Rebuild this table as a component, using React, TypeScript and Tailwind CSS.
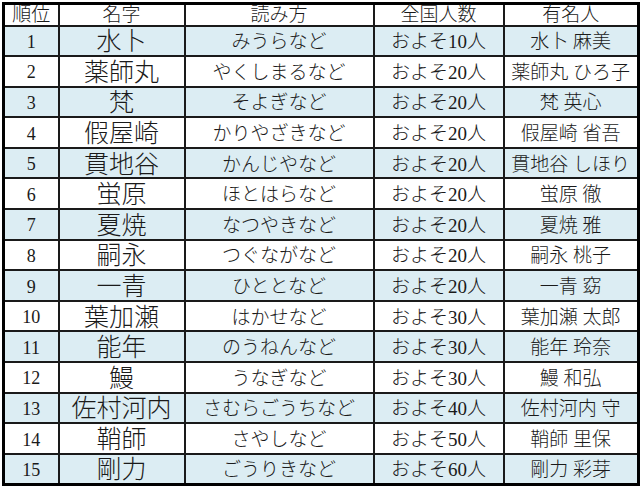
import React from "react";

const rows: [string, string, string, string, string][] = [
  ["1", "水卜", "みうらなど", "およそ10人", "水卜 麻美"],
  ["2", "薬師丸", "やくしまるなど", "およそ20人", "薬師丸 ひろ子"],
  ["3", "梵", "そよぎなど", "およそ20人", "梵 英心"],
  ["4", "假屋崎", "かりやざきなど", "およそ20人", "假屋崎 省吾"],
  ["5", "貫地谷", "かんじやなど", "およそ20人", "貫地谷 しほり"],
  ["6", "蛍原", "ほとはらなど", "およそ20人", "蛍原 徹"],
  ["7", "夏焼", "なつやきなど", "およそ20人", "夏焼 雅"],
  ["8", "嗣永", "つぐながなど", "およそ20人", "嗣永 桃子"],
  ["9", "一青", "ひととなど", "およそ20人", "一青 窈"],
  ["10", "葉加瀬", "はかせなど", "およそ30人", "葉加瀬 太郎"],
  ["11", "能年", "のうねんなど", "およそ30人", "能年 玲奈"],
  ["12", "鰻", "うなぎなど", "およそ30人", "鰻 和弘"],
  ["13", "佐村河内", "さむらごうちなど", "およそ40人", "佐村河内 守"],
  ["14", "鞘師", "さやしなど", "およそ50人", "鞘師 里保"],
  ["15", "剛力", "ごうりきなど", "およそ60人", "剛力 彩芽"],
];

export default function App() {
  return (
    <div className="w-[640px] h-[489px] bg-white pl-[2px] pt-[2px] overflow-hidden font-['Liberation_Serif','Noto_Sans_CJK_JP',serif] text-[#1a1a1a]">
      <table className="border-collapse border-[3px] border-black table-fixed w-[635px]">
        <colgroup>
          <col className="w-[55px]" />
          <col className="w-[126px]" />
          <col className="w-[189px]" />
          <col className="w-[130px]" />
          <col className="w-[135px]" />
        </colgroup>
        <thead>
          <tr className="h-[22px] bg-white text-[19px] leading-none">
            <th className="border-2 border-[#1a1a1a] font-light p-0 whitespace-nowrap">順位</th>
            <th className="border-2 border-[#1a1a1a] font-light p-0">名字</th>
            <th className="border-2 border-[#1a1a1a] font-light p-0">読み方</th>
            <th className="border-2 border-[#1a1a1a] font-light p-0">全国人数</th>
            <th className="border-2 border-[#1a1a1a] font-light p-0">有名人</th>
          </tr>
        </thead>
        <tbody>
          {rows.map((r, i) => (
            <tr key={r[0]} className={`h-[30.6px] leading-none ${i % 2 === 0 ? "bg-[#dcedf3]" : "bg-white"}`}>
              <td className="border-2 border-[#1a1a1a] p-0 pt-[2px] text-center text-[18px]">{r[0]}</td>
              <td className="border-2 border-[#1a1a1a] p-0 pt-[2px] text-center text-[25px] font-light whitespace-nowrap">{r[1]}</td>
              <td className="border-2 border-[#1a1a1a] p-0 pt-[2px] text-center text-[19px] font-light whitespace-nowrap">{r[2]}</td>
              <td className="border-2 border-[#1a1a1a] p-0 pt-[2px] text-center text-[19px] font-light whitespace-nowrap">{r[3]}</td>
              <td className="border-2 border-[#1a1a1a] p-0 pt-[2px] text-center text-[19px] font-light whitespace-nowrap">{r[4]}</td>
            </tr>
          ))}
        </tbody>
      </table>
    </div>
  );
}
